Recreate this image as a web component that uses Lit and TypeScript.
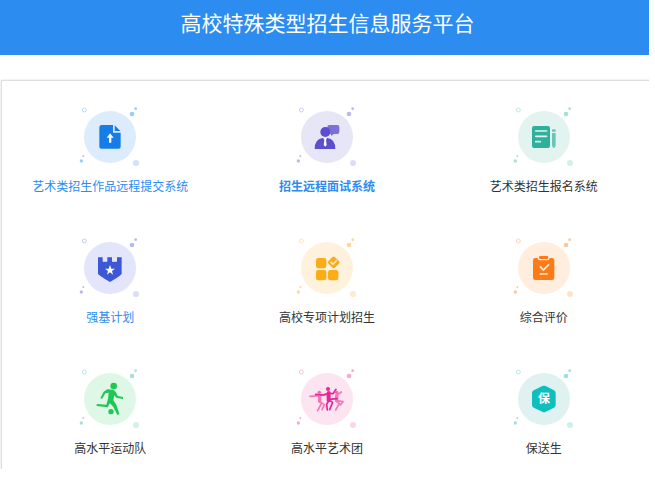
import { LitElement, html, css, svg } from "lit";
import { customElement } from "lit/decorators.js";
import { classMap } from "lit/directives/class-map.js";
import { styleMap } from "lit/directives/style-map.js";

interface Service {
  name: string;
  disc: string;
  dot: string;
  link?: boolean;
  strong?: boolean;
  icon: unknown;
}

const services: Service[] = [
  {
    name: "艺术类招生作品远程提交系统",
    disc: "#dcecfc",
    dot: "#9dcaf8",
    link: true,
    icon: svg`
      <path fill="#177de6" d="M95 81H129V104H152V146Q152 152 146 152H94Q88 152 88 146V88Q88 81 95 81Z"/>
      <path fill="#177de6" d="M134 82L151 99H134Z"/>
      <path fill="#fff" d="M120 106L131 119H124V134H117V119H110Z"/>`,
  },
  {
    name: "招生远程面试系统",
    disc: "#e7e6f7",
    dot: "#bdb8ef",
    link: true,
    strong: true,
    icon: svg`
      <path fill="#7b70d8" d="M127 81H151Q157 81 157 87V102Q157 108 151 108H140L133 114L131 108L121 104V87Q121 81 127 81Z"/>
      <circle fill="#5b4fcf" cx="115" cy="102" r="15"/>
      <path fill="#5b4fcf" d="M83 153Q83 123 107 120H121Q145 123 145 153Z"/>
      <path fill="#fff" d="M109 120H120L117 126L119 141L115 146L110 141L112 126Z"/>`,
  },
  {
    name: "艺术类招生报名系统",
    disc: "#e2f3f0",
    dot: "#aadfd7",
    icon: svg`
      <rect fill="#2fb09c" x="84" y="84" width="54" height="66" rx="6"/>
      <path stroke="#e2f3f0" stroke-width="5" stroke-linecap="round" d="M95 99H128M95 115H128M95 131H109"/>
      <path fill="#68c6b8" d="M146 94H153Q155 94 155 97V101H144V97Q144 94 146 94ZM144 105H155V143L151 150H148L144 143Z"/>`,
  },
  {
    name: "强基计划",
    disc: "#e3e6fa",
    dot: "#b3bbf0",
    link: true,
    icon: svg`
      <path fill="#3d57d6" d="M84 85H98V98H112V85H126V98H141V85H155V135Q153 140 120 159Q87 140 84 135Z"/>
      <path fill="#fff" d="M120 108L124 119H135L126 126L129 137L120 130L111 137L114 126L105 119H116Z"/>`,
  },
  {
    name: "高校专项计划招生",
    disc: "#fff2dd",
    dot: "#fdd898",
    icon: svg`
      <g fill="#fcac17">
        <rect x="87" y="87" width="31" height="31" rx="7"/>
        <rect x="87" y="123" width="31" height="31" rx="7"/>
        <rect x="123" y="123" width="31" height="31" rx="7"/>
        <rect x="126" y="86" width="28" height="28" rx="6" transform="rotate(45 140 100)"/>
      </g>
      <path fill="none" stroke="#fff2dd" stroke-width="4" d="M131 99L138 106L149 94"/>`,
  },
  {
    name: "综合评价",
    disc: "#ffeedd",
    dot: "#fdc796",
    icon: svg`
      <path fill="#fd7b17" d="M94 87H101Q102 94 108 94H130Q136 94 137 87H144Q151 87 151 94V146Q151 153 144 153H94Q87 153 87 146V94Q87 87 94 87Z"/>
      <rect fill="#fd7b17" x="105" y="81" width="28" height="9" rx="4"/>
      <path fill="none" stroke="#ffeedd" stroke-width="5" d="M108 112L118 123L135 106M107 135H131"/>`,
  },
  {
    name: "高水平运动队",
    disc: "#def7e7",
    dot: "#aadfd8",
    icon: svg`
      <g fill="#1fc855">
        <circle cx="131" cy="78" r="10"/>
        <circle cx="123" cy="155" r="8"/>
        <path d="M112 88L130 89L138 97L143 108L159 111V117L139 113L133 106L130 121L139 134L148 162L142 165L130 141L120 130L113 142L80 138V132L109 134L114 117L116 98L106 100L96 117L91 114L101 95Z"/>
      </g>`,
  },
  {
    name: "高水平艺术团",
    disc: "#fde4f1",
    dot: "#f6abd2",
    icon: svg`
      <g fill="none" stroke-linecap="round" stroke-linejoin="round">
        <g stroke="#f178b7" stroke-width="5">
          <path d="M69 109L98 107L124 103M98 108L97 126L104 129L92 152M100 126L112 134L105 149M148 107L163 96M148 107L148 124L157 130L146 150M150 122L168 125L160 135"/>
          <path stroke-width="10" d="M98 108V124M149 106V122"/>
        </g>
        <g stroke="#e82597" stroke-width="5">
          <path d="M123 100L108 105L86 103M124 100L138 101L147 88M126 120L119 133L121 150M128 121L137 127L128 149M126 118L150 116"/>
          <path stroke-width="12" d="M125 99V121"/>
        </g>
      </g>
      <circle fill="#ef65ad" cx="97" cy="97" r="5"/>
      <circle fill="#e82597" cx="123" cy="87" r="6"/>
      <circle fill="#ef65ad" cx="149" cy="97" r="5"/>`,
  },
  {
    name: "保送生",
    disc: "#dff1f1",
    dot: "#9ddfe0",
    icon: svg`
      <path fill="#0fbfbd" d="M115 78Q120 76 125 78L150 91Q155 94 155 99V135Q155 140 150 143L125 155Q120 158 115 155L89 143Q84 140 84 135V99Q84 94 89 91Z"/>
      <text class="glyph" x="120" y="130" text-anchor="middle">保</text>`,
  },
];

@customElement("service-tile")
class ServiceTile extends LitElement {
  static properties = { service: { attribute: false } };
  declare service: Service;

  static styles = css`
    :host {
      display: block;
    }
    .tile {
      display: flex;
      flex-direction: column;
      align-items: center;
      color: #333;
      text-decoration: none;
      font-size: 12px;
      line-height: 24px;
      white-space: nowrap;
    }
    .link {
      color: #2d8cf0;
    }
    .strong {
      font-weight: 700;
    }
    .art {
      display: block;
      width: 80px;
      height: 76px;
    }
    .glyph {
      fill: #fff;
      font-size: 36px;
      font-weight: 700;
    }
  `;

  render() {
    const s = this.service;
    return html`
      <a href="#" class=${classMap({ tile: true, link: !!s.link, strong: !!s.strong })}>
        <svg class="art" viewBox="0 0 240 228" aria-hidden="true">
          <circle cx="120" cy="117" r="78" style=${styleMap({ fill: s.disc })} />
          <g style=${styleMap({ fill: s.dot })}>
            <circle cx="186" cy="48" r="7" />
            <circle cx="197" cy="32" r="4" />
            <circle cx="34" cy="189" r="5" />
            <circle cx="40" cy="174" r="3" />
            <circle cx="198" cy="195" r="9" opacity="0.5" />
          </g>
          <circle cx="43" cy="36" r="6" fill="none" stroke-width="3" opacity="0.7" style=${styleMap({ stroke: s.dot })} />
          ${s.icon}
        </svg>
        <span>${s.name}</span>
      </a>
    `;
  }
}

@customElement("app-root")
class AppRoot extends LitElement {
  static styles = css`
    :host {
      display: block;
      margin-right: 6px;
      overflow: hidden;
      background: #fff;
      font-family: "Noto Sans CJK SC", sans-serif;
    }
    .page {
      margin-right: -6px;
    }
    .header {
      padding: 6px 0 17px;
      background: #2d8cf0;
      color: #fff;
      text-align: center;
    }
    .title {
      margin: 0;
      font-size: 21px;
      font-weight: 400;
      line-height: 32px;
    }
    .panel {
      display: grid;
      grid-template-columns: repeat(3, 1fr);
      row-gap: 31px;
      margin: 25px 2px 0 1px;
      padding: 17px 0 9px;
      border: 1px solid #dcdee2;
      border-bottom: 0;
      box-shadow: 0 0 2px #dcdee2;
    }
  `;

  render() {
    return html`
      <div class="page">
        <header class="header"><h1 class="title">高校特殊类型招生信息服务平台</h1></header>
        <main class="panel">
          ${services.map((s) => html`<service-tile .service=${s}></service-tile>`)}
        </main>
      </div>
    `;
  }
}
